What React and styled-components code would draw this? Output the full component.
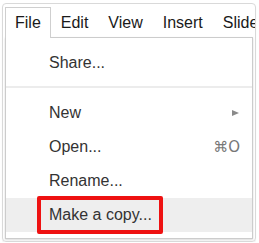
import React from 'react';
import styled, { createGlobalStyle } from 'styled-components';

const GlobalStyle = createGlobalStyle`
    html, body {
        margin: 0;
        padding: 0;
        background: #ffffff;
    }
    body {
        font-family: "Liberation Sans", Arial, sans-serif;
        color: #222;
    }
`

const menuBar = ["File", "Edit", "View", "Insert", "Slide"];

const menuItems = [
    { label: "New", submenu: true, top: true },
    { label: "Open...", shortcut: "⌘O" },
    { label: "Rename..." },
    { label: "Make a copy...", hover: true, marked: true },
];

export default function App() {
    return (
        <>
            <GlobalStyle />
            <Frame>
                <Bar>
                    {menuBar.map((name, i) => (
                        <BarItem key={name} active={i === 0}>{name}</BarItem>
                    ))}
                </Bar>
                <Dropdown>
                    <Item>Share...</Item>
                    <Separator />
                    {menuItems.map((item) => (
                        <Item key={item.label} hover={item.hover}>
                            <Label>{item.label}</Label>
                            {item.submenu && <Arrow />}
                            {item.shortcut && <Shortcut>{item.shortcut}</Shortcut>}
                            {item.marked && <Marker />}
                        </Item>
                    ))}
                </Dropdown>
            </Frame>
        </>
    )
}

const Frame = styled.div`
    box-sizing: border-box;
    width: 254px;
    height: 239px;
    margin: 3px 0 0 2px;
    padding: 3px 2px 0 2px;
    border: 1px solid #d9d9d9;
    border-radius: 4px;
    box-shadow: 0 1px 1px rgba(0, 0, 0, 0.08);
    overflow: hidden;
    display: flex;
    flex-direction: column;
`

const Bar = styled.div`
    display: flex;
    flex-direction: row;
    height: 30px;
    white-space: nowrap;
`

const BarItem = styled.div`
    position: relative;
    z-index: ${props => props.active ? 2 : 0};
    height: ${props => props.active ? "31px" : "30px"};
    margin-bottom: ${props => props.active ? "-1px" : "0"};
    box-sizing: border-box;
    padding: 0 9px;
    border: 1px solid ${props => props.active ? "#cfcfcf" : "transparent"};
    border-bottom: none;
    background: ${props => props.active ? "#ffffff" : "transparent"};
    font-size: 16px;
    line-height: 29px;
    color: #1a1a1a;
`

const Dropdown = styled.div`
    position: relative;
    z-index: 1;
    box-sizing: border-box;
    width: 248px;
    height: 202px;
    padding: 8px 0 6px 0;
    border: 1px solid #cccccc;
    background: #ffffff;
    box-shadow: 0 1px 2px rgba(0, 0, 0, 0.15);
    display: flex;
    flex-direction: column;
`

const Item = styled.div`
    position: relative;
    display: flex;
    flex-direction: row;
    align-items: center;
    height: 34px;
    padding: 0 12px 0 43px;
    font-size: 16px;
    line-height: 34px;
    color: #333;
    background: ${props => props.hover ? "#eeeeee" : "transparent"};
`

const Label = styled.span`
    flex: 1;
`

const Separator = styled.div`
    height: 2px;
    margin: 6px 0 8px 0;
    background: #ececec;
`

const Arrow = styled.span`
    width: 0;
    height: 0;
    margin-right: 1px;
    border-left: 7px solid #8a8a8a;
    border-top: 3.5px solid transparent;
    border-bottom: 3.5px solid transparent;
`

const Shortcut = styled.span`
    font-family: "DejaVu Sans", "Liberation Sans", sans-serif;
    font-size: 15px;
    color: #777;
`

const Marker = styled.span`
    position: absolute;
    left: 31px;
    top: -2px;
    width: 126px;
    height: 38px;
    box-sizing: border-box;
    border: 4px solid #ee1111;
    border-radius: 2px;
`
